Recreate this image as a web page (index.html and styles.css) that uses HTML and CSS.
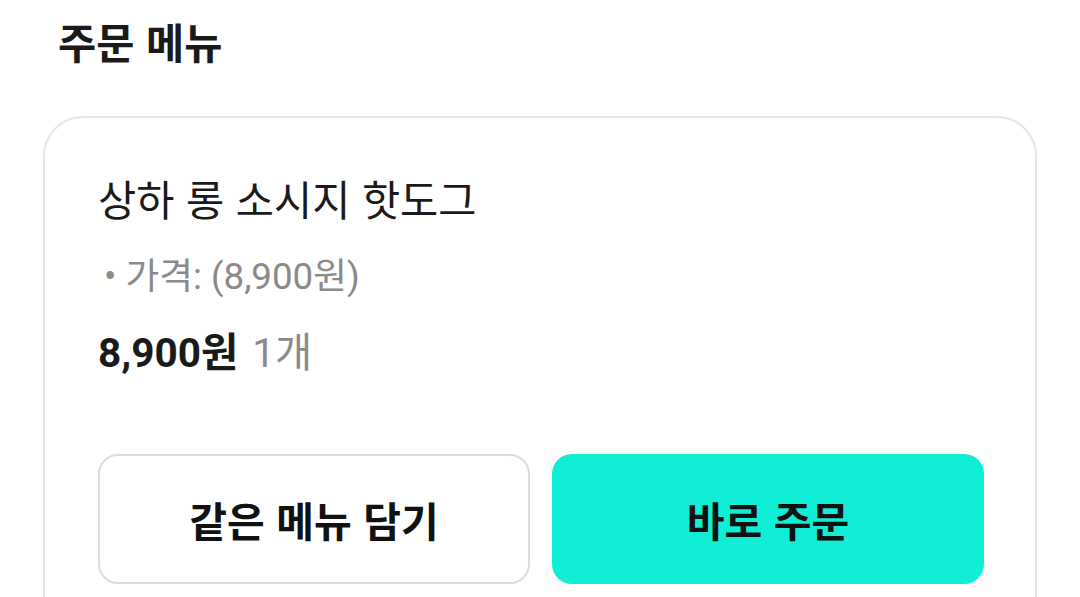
FILE: index.html
```html
<!DOCTYPE html>
<html lang="ko">
<head>
<meta charset="utf-8">
<link rel="stylesheet" href="styles.css">
</head>
<body>
<main class="page">
  <h1 class="section-title">주문 메뉴</h1>
  <section class="card">
    <div class="item-name">상하 롱 소시지 핫도그</div>
    <div class="item-option">• 가격: (8,900원)</div>
    <div class="item-total"><strong>8,900원</strong> <span class="qty">1개</span></div>
    <div class="actions">
      <button class="btn btn-outline">같은 메뉴 담기</button>
      <button class="btn btn-primary">바로 주문</button>
    </div>
  </section>
</main>
</body>
</html>
```
FILE: styles.css
```css
* { box-sizing: border-box; }
html, body { margin: 0; padding: 0; background: #fff; }
body {
  font-family: "Noto Sans CJK KR", "Noto Sans", Roboto, sans-serif;
  color: #1a1a1a;
  overflow: hidden;
  height: 597px;
}
.page {
  padding: 15px 43px 0 43px;
}
.section-title {
  margin: 0 0 0 15px;
  font-size: 41.5px;
  font-weight: 700;
  line-height: 52px;
  color: #1a1a1a;
}
.card {
  margin-top: 49px;
  border: 2px solid #e6e6e6;
  border-radius: 40px;
  padding: 50px 51px 60px 53px;
  height: 600px;
}
.item-name {
  font-size: 41.5px;
  line-height: 60px;
  font-weight: 400;
  color: #1a1a1a;
}
.item-option {
  margin-top: 27px;
  font-family: Roboto, "Noto Sans CJK KR", sans-serif;
  font-size: 36.7px;
  line-height: 44px;
  color: #8a8a8a;
  padding-left: 6px;
}
.item-total {
  margin-top: 32px;
  font-family: Roboto, "Noto Sans CJK KR", sans-serif;
  font-size: 40.5px;
  line-height: 44px;
}
.item-total strong { font-weight: 700; color: #1a1a1a; }
.qty { color: #8a8a8a; font-weight: 400; margin-left: 4px; }
.actions {
  margin-top: 79px;
  display: grid;
  grid-template-columns: 1fr 1fr;
  gap: 22px;
}
.btn {
  height: 130px;
  border-radius: 20px;
  font-family: "Noto Sans CJK KR", sans-serif;
  font-size: 41px;
  font-weight: 700;
  color: #111;
  cursor: pointer;
}
.btn-outline {
  background: #fff;
  border: 2px solid #dcdcdc;
}
.btn-primary {
  background: #10eed5;
  border: none;
}
```
